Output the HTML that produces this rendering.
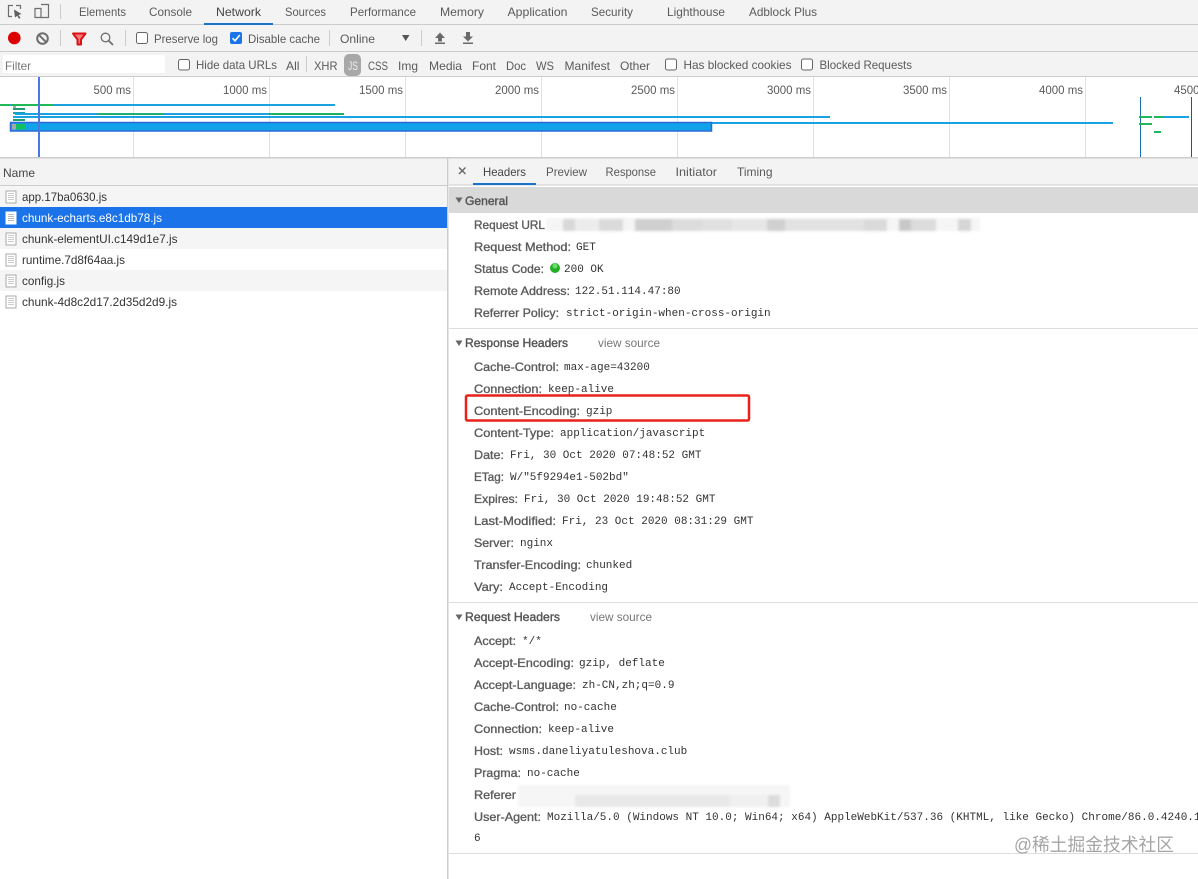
<!DOCTYPE html>
<html lang="en">
<head>
<meta charset="utf-8">
<title>DevTools Network</title>
<style>
html,body{margin:0;padding:0;background:#fff;width:1198px;height:879px;overflow:hidden}
svg{display:block}
text{font-family:"Liberation Sans",sans-serif;font-size:12px;fill:#555}
.t{fill:#5a5a5a}
.a{fill:#444}
.n{font-size:12px;fill:#5c5c5c;stroke:#5c5c5c;stroke-width:.35px}
.m{font-family:"Liberation Mono",monospace;font-size:11px;fill:#333;transform:translateY(-1px)}
.h{fill:#555;stroke:#555;stroke-width:.4px}
.f{fill:#333}
</style>
</head>
<body>
<svg xmlns="http://www.w3.org/2000/svg" width="1198" height="879" viewBox="0 0 1198 879">
<defs>
<filter id="b" x="-5%" y="-30%" width="110%" height="160%"><feGaussianBlur stdDeviation="1.2"/></filter>
<g id="doc"><path d="M.5.5h10v12H.5z" fill="#fff" stroke="#aaa"/><path d="M2.500 3h6M2.500 5h6M2.500 7h6M2.500 9h6" stroke="#ccc" stroke-width="1"/></g>
</defs>
<rect width="1198" height="879" fill="#fff"/>

<!-- top bars -->
<rect width="1198" height="77" fill="#f3f3f3"/>
<rect y="24" width="1198" height="1" fill="#ccc"/>
<rect y="51" width="1198" height="1" fill="#ccc"/>
<rect y="76" width="1198" height="1" fill="#ccc"/>

<!-- inspect icon -->
<path d="M13 5.500H8.500V16.500H12" fill="none" stroke="#6e6e6e" stroke-width="1.200"/>
<path d="M16 5.500H20.500V9" fill="none" stroke="#6e6e6e" stroke-width="1.200"/>
<path d="M14 9.500L21.500 14L18.500 15L20.500 18L19 18.800L17.200 15.800L15 17.500Z" fill="#5f5f5f"/>
<!-- device icon -->
<path d="M35 8.500H41V17.500H35ZM41 4.500H48.500V17.500H41" fill="none" stroke="#6e6e6e" stroke-width="1.200"/>
<rect x="60" y="4" width="1" height="15" fill="#ccc"/>

<!-- tabs -->
<g>
<text class="t" x="79" y="16" textLength="47" lengthAdjust="spacingAndGlyphs">Elements</text>
<text class="t" x="149" y="16" textLength="43" lengthAdjust="spacingAndGlyphs">Console</text>
<text class="a" x="216" y="16" textLength="45" lengthAdjust="spacingAndGlyphs">Network</text>
<text class="t" x="285" y="16" textLength="41" lengthAdjust="spacingAndGlyphs">Sources</text>
<text class="t" x="350" y="16" textLength="66" lengthAdjust="spacingAndGlyphs">Performance</text>
<text class="t" x="440" y="16" textLength="44" lengthAdjust="spacingAndGlyphs">Memory</text>
<text class="t" x="507.500" y="16" textLength="60" lengthAdjust="spacingAndGlyphs">Application</text>
<text class="t" x="591" y="16" textLength="42" lengthAdjust="spacingAndGlyphs">Security</text>
<text class="t" x="667" y="16" textLength="58" lengthAdjust="spacingAndGlyphs">Lighthouse</text>
<text class="t" x="749" y="16" textLength="68" lengthAdjust="spacingAndGlyphs">Adblock Plus</text>
</g>
<rect x="204" y="23" width="69" height="2" fill="#1a73c8"/>

<!-- toolbar -->
<circle cx="14.300" cy="38" r="6.300" fill="#dd0000"/>
<circle cx="42.500" cy="38.500" r="5.300" fill="none" stroke="#6e6e6e" stroke-width="2"/>
<path d="M38.800 34.800L46.200 42.200" stroke="#6e6e6e" stroke-width="2"/>
<rect x="60" y="30" width="1" height="16" fill="#ccc"/>
<path d="M73 33.500H85.500L81 39.500V44.500H77.500V39.500Z" fill="#f47c7c" stroke="#dd1111" stroke-width="2" stroke-linejoin="round"/>
<circle cx="105.500" cy="37.500" r="4.300" fill="none" stroke="#6e6e6e" stroke-width="1.300"/>
<path d="M108.500 40.500L113 45" stroke="#6e6e6e" stroke-width="1.800"/>
<rect x="125" y="30" width="1" height="16" fill="#ccc"/>
<rect x="136.500" y="32.500" width="11" height="11" rx="2" fill="#fff" stroke="#666"/>
<text class="t" x="154" y="43" textLength="64" lengthAdjust="spacingAndGlyphs">Preserve log</text>
<rect x="230" y="32" width="12" height="12" rx="2" fill="#1a73e8"/>
<path d="M232.500 38.200L235 40.800L239.800 35" fill="none" stroke="#fff" stroke-width="1.600"/>
<text class="t" x="248" y="43" textLength="72" lengthAdjust="spacingAndGlyphs">Disable cache</text>
<rect x="329" y="30" width="1" height="16" fill="#ccc"/>
<text class="t" x="340" y="43" textLength="35" lengthAdjust="spacingAndGlyphs">Online</text>
<path d="M402 35H409.500L405.700 41Z" fill="#555"/>
<rect x="421" y="30" width="1" height="16" fill="#ccc"/>
<path d="M440 32.500L445 38H442V41.500H438V38H435Z" fill="#6a6a6a"/>
<rect x="435" y="42.500" width="10" height="1.500" fill="#6a6a6a"/>
<path d="M468 41.500L473 36.500H470V32H466V36.500H463Z" fill="#6a6a6a"/>
<rect x="463" y="42.500" width="10" height="1.500" fill="#6a6a6a"/>

<!-- filter row -->
<rect x="3" y="55" width="162" height="18" fill="#fff"/>
<text x="5" y="70" style="fill:#777" textLength="26" lengthAdjust="spacingAndGlyphs">Filter</text>
<rect x="178.500" y="59.500" width="11" height="10.500" rx="2" fill="#fff" stroke="#666"/>
<text class="t" x="196" y="69" textLength="81" lengthAdjust="spacingAndGlyphs">Hide data URLs</text>
<text class="t" x="286" y="70" textLength="13.500" lengthAdjust="spacingAndGlyphs">All</text>
<rect x="306" y="56" width="1" height="16" fill="#ccc"/>
<text class="t" x="314" y="70" textLength="23.500" lengthAdjust="spacingAndGlyphs">XHR</text>
<rect x="344" y="54" width="17" height="22" rx="5" fill="#a8a8a8"/>
<text x="348" y="70" style="fill:#eee" textLength="10" lengthAdjust="spacingAndGlyphs">JS</text>
<text class="t" x="368" y="70" textLength="20" lengthAdjust="spacingAndGlyphs">CSS</text>
<text class="t" x="398" y="70" textLength="20" lengthAdjust="spacingAndGlyphs">Img</text>
<text class="t" x="429" y="70" textLength="33" lengthAdjust="spacingAndGlyphs">Media</text>
<text class="t" x="472" y="70" textLength="24" lengthAdjust="spacingAndGlyphs">Font</text>
<text class="t" x="506" y="70" textLength="20" lengthAdjust="spacingAndGlyphs">Doc</text>
<text class="t" x="536" y="70" textLength="18" lengthAdjust="spacingAndGlyphs">WS</text>
<text class="t" x="564.500" y="70" textLength="45.500" lengthAdjust="spacingAndGlyphs">Manifest</text>
<text class="t" x="620" y="70" textLength="30" lengthAdjust="spacingAndGlyphs">Other</text>
<rect x="665.500" y="59" width="11" height="11" rx="2" fill="#fff" stroke="#666"/>
<text class="t" x="683.500" y="69" textLength="108" lengthAdjust="spacingAndGlyphs">Has blocked cookies</text>
<rect x="801.500" y="59" width="11" height="11" rx="2" fill="#fff" stroke="#666"/>
<text class="t" x="819.500" y="69" textLength="92.500" lengthAdjust="spacingAndGlyphs">Blocked Requests</text>

<!-- overview grid -->
<g fill="#e2e2e2">
<rect x="133" y="77" width="1" height="80"/><rect x="269" y="77" width="1" height="80"/>
<rect x="405" y="77" width="1" height="80"/><rect x="541" y="77" width="1" height="80"/>
<rect x="677" y="77" width="1" height="80"/><rect x="813" y="77" width="1" height="80"/>
<rect x="949" y="77" width="1" height="80"/><rect x="1085" y="77" width="1" height="80"/>
</g>
<rect y="157" width="1198" height="1.500" fill="#ccc"/>
<g>
<text class="t" x="93.500" y="94" textLength="37.500" lengthAdjust="spacingAndGlyphs">500 ms</text>
<text class="t" x="223" y="94" textLength="44" lengthAdjust="spacingAndGlyphs">1000 ms</text>
<text class="t" x="359" y="94" textLength="44" lengthAdjust="spacingAndGlyphs">1500 ms</text>
<text class="t" x="495" y="94" textLength="44" lengthAdjust="spacingAndGlyphs">2000 ms</text>
<text class="t" x="631" y="94" textLength="44" lengthAdjust="spacingAndGlyphs">2500 ms</text>
<text class="t" x="767" y="94" textLength="44" lengthAdjust="spacingAndGlyphs">3000 ms</text>
<text class="t" x="903" y="94" textLength="44" lengthAdjust="spacingAndGlyphs">3500 ms</text>
<text class="t" x="1039" y="94" textLength="44" lengthAdjust="spacingAndGlyphs">4000 ms</text>
<text class="t" x="1174" y="94" textLength="44" lengthAdjust="spacingAndGlyphs">4500 ms</text>
</g>

<!-- waterfall -->
<g>
<rect x="0" y="104" width="335" height="2" fill="#1aa3e0"/>
<rect x="0" y="104" width="10" height="2" fill="#1fba55"/>
<rect x="12" y="104" width="41" height="2" fill="#1fba55"/>
<rect x="13" y="106" width="3" height="2" fill="#aaa"/>
<rect x="13" y="108" width="12" height="2" fill="#1f9f70"/>
<rect x="13" y="112" width="12" height="2" fill="#1a9fb0"/>
<rect x="15" y="113" width="329" height="2" fill="#1aa3e0"/>
<rect x="97" y="113" width="66" height="2" fill="#1fb070"/>
<rect x="269" y="113" width="75" height="2" fill="#1fb060"/>
<rect x="13" y="116" width="817" height="2" fill="#1aa3e0"/>
<rect x="13" y="119" width="12" height="2" fill="#1f9f70"/>
<rect x="13" y="122" width="1100" height="2" fill="#1aa3e0"/>
<rect x="10.500" y="122.500" width="701" height="8.500" fill="#11a3ea" stroke="#2f68d8" stroke-width="1.500"/>
<rect x="12" y="124" width="4" height="5.500" fill="#a8a8a8"/>
<rect x="16" y="124" width="10" height="5.500" fill="#12c060"/>
</g>
<rect x="38" y="77" width="2" height="80" fill="#4a78e0"/>
<rect x="1140" y="97" width="1" height="60" fill="#1a6fb5"/>
<rect x="1191" y="97" width="1" height="60" fill="#a02828"/>
<rect x="1139" y="116" width="13" height="2" fill="#1fb860"/>
<rect x="1154" y="116" width="10" height="2" fill="#1fb860"/>
<rect x="1164" y="116" width="25" height="2" fill="#1aa3e0"/>
<rect x="1139" y="123" width="13" height="2" fill="#1fb860"/>
<rect x="1154" y="131" width="7" height="2" fill="#1fb860"/>

<!-- left panel -->
<rect y="158.500" width="447" height="27" fill="#f3f3f3"/>
<rect y="185" width="447" height="1" fill="#ccc"/>
<text class="a" x="3" y="177" textLength="32" lengthAdjust="spacingAndGlyphs">Name</text>
<rect y="186" width="447" height="21" fill="#f5f5f5"/>
<rect y="207" width="447" height="21" fill="#1a73e8"/>
<rect y="228" width="447" height="21" fill="#f5f5f5"/>
<rect y="270" width="447" height="21" fill="#f5f5f5"/>
<use href="#doc" x="5.500" y="190.500"/>
<g transform="translate(5.500 211.500)"><path d="M.5.5h10v12H.5z" fill="#fff" stroke="#fff"/><path d="M2.500 3h6M2.500 5h6M2.500 7h6M2.500 9h6" stroke="#bbb"/></g>
<use href="#doc" x="5.500" y="232.500"/>
<use href="#doc" x="5.500" y="253.500"/>
<use href="#doc" x="5.500" y="274.500"/>
<use href="#doc" x="5.500" y="295.500"/>
<text class="f" x="22" y="201" textLength="85" lengthAdjust="spacingAndGlyphs">app.17ba0630.js</text>
<text x="22" y="222" style="fill:#fff" textLength="140" lengthAdjust="spacingAndGlyphs">chunk-echarts.e8c1db78.js</text>
<text class="f" x="22" y="243" textLength="155.500" lengthAdjust="spacingAndGlyphs">chunk-elementUI.c149d1e7.js</text>
<text class="f" x="22" y="264" textLength="103" lengthAdjust="spacingAndGlyphs">runtime.7d8f64aa.js</text>
<text class="f" x="22" y="285" textLength="43" lengthAdjust="spacingAndGlyphs">config.js</text>
<text class="f" x="22" y="306" textLength="155" lengthAdjust="spacingAndGlyphs">chunk-4d8c2d17.2d35d2d9.js</text>
<rect x="447" y="158" width="1.500" height="721" fill="#ccc"/>

<!-- right panel tabs -->
<rect x="449" y="158.500" width="749" height="26.500" fill="#f3f3f3"/>
<rect x="449" y="184.500" width="749" height="1" fill="#ccc"/>
<path d="M459 167.500L465.500 174M465.500 167.500L459 174" stroke="#666" stroke-width="1.400"/>
<text class="a" x="483" y="176" textLength="43" lengthAdjust="spacingAndGlyphs">Headers</text>
<text class="t" x="546" y="176" textLength="41" lengthAdjust="spacingAndGlyphs">Preview</text>
<text class="t" x="605.500" y="176" textLength="50.500" lengthAdjust="spacingAndGlyphs">Response</text>
<text class="t" x="675.500" y="176" textLength="41.500" lengthAdjust="spacingAndGlyphs">Initiator</text>
<text class="t" x="737" y="176" textLength="35.500" lengthAdjust="spacingAndGlyphs">Timing</text>
<rect x="473" y="183" width="63" height="2" fill="#1a73c8"/>

<!-- General -->
<rect x="449" y="187" width="749" height="26" fill="#d9d9d9"/>
<path d="M455.500 197.500H462.500L459 203Z" fill="#666"/>
<text class="h" x="465" y="205" textLength="43" lengthAdjust="spacingAndGlyphs">General</text>
<text class="n" x="474" y="229" textLength="71" lengthAdjust="spacingAndGlyphs">Request URL</text>
<g filter="url(#b)">
<rect x="546" y="218" width="434" height="13" fill="#f5f5f5"/>
<rect x="563" y="219" width="12" height="12" fill="#d8d8d8"/>
<rect x="575" y="219" width="24" height="12" fill="#ececec"/>
<rect x="599" y="219" width="24" height="12" fill="#dadada"/>
<rect x="635" y="219" width="37" height="12" fill="#cfcfcf"/>
<rect x="672" y="219" width="30" height="12" fill="#dcdcdc"/>
<rect x="702" y="219" width="30" height="12" fill="#e0e0e0"/>
<rect x="732" y="219" width="35" height="12" fill="#e6e6e6"/>
<rect x="767" y="219" width="18" height="12" fill="#d0d0d0"/>
<rect x="785" y="219" width="79" height="12" fill="#e2e2e2"/>
<rect x="864" y="219" width="23" height="12" fill="#dadada"/>
<rect x="899" y="219" width="12" height="12" fill="#c8c8c8"/>
<rect x="911" y="219" width="25" height="12" fill="#dcdcdc"/>
<rect x="958" y="219" width="13" height="12" fill="#d6d6d6"/>
</g>
<text class="n" x="474" y="251" textLength="97" lengthAdjust="spacingAndGlyphs">Request Method:</text>
<text class="m" x="576" y="251">GET</text>
<text class="n" x="474" y="273" textLength="70" lengthAdjust="spacingAndGlyphs">Status Code:</text>
<circle cx="555" cy="268" r="5" fill="#22b022"/>
<circle cx="555" cy="266" r="2.500" fill="#6fdc6f"/>
<text class="m" x="564" y="273">200 OK</text>
<text class="n" x="474" y="295" textLength="96" lengthAdjust="spacingAndGlyphs">Remote Address:</text>
<text class="m" x="575" y="295">122.51.114.47:80</text>
<text class="n" x="474" y="317" textLength="85" lengthAdjust="spacingAndGlyphs">Referrer Policy:</text>
<text class="m" x="566" y="317">strict-origin-when-cross-origin</text>
<rect x="449" y="328" width="749" height="1" fill="#ddd"/>

<!-- Response Headers -->
<path d="M455.500 340.500H462.500L459 346Z" fill="#666"/>
<text class="h" x="465" y="347" textLength="103" lengthAdjust="spacingAndGlyphs">Response Headers</text>
<text x="598" y="347" style="fill:#777" textLength="62" lengthAdjust="spacingAndGlyphs">view source</text>
<text class="n" x="474" y="371" textLength="85" lengthAdjust="spacingAndGlyphs">Cache-Control:</text>
<text class="m" x="564" y="371">max-age=43200</text>
<text class="n" x="474" y="393" textLength="68" lengthAdjust="spacingAndGlyphs">Connection:</text>
<text class="m" x="548" y="393">keep-alive</text>
<text class="n" x="474" y="415" textLength="106" lengthAdjust="spacingAndGlyphs">Content-Encoding:</text>
<text class="m" x="586" y="415">gzip</text>
<text class="n" x="474" y="437" textLength="80" lengthAdjust="spacingAndGlyphs">Content-Type:</text>
<text class="m" x="560" y="437">application/javascript</text>
<text class="n" x="474" y="459" textLength="30" lengthAdjust="spacingAndGlyphs">Date:</text>
<text class="m" x="510" y="459">Fri, 30 Oct 2020 07:48:52 GMT</text>
<text class="n" x="474" y="481" textLength="30" lengthAdjust="spacingAndGlyphs">ETag:</text>
<text class="m" x="510" y="481">W/"5f9294e1-502bd"</text>
<text class="n" x="474" y="503" textLength="44" lengthAdjust="spacingAndGlyphs">Expires:</text>
<text class="m" x="524" y="503">Fri, 30 Oct 2020 19:48:52 GMT</text>
<text class="n" x="474" y="525" textLength="82" lengthAdjust="spacingAndGlyphs">Last-Modified:</text>
<text class="m" x="562" y="525">Fri, 23 Oct 2020 08:31:29 GMT</text>
<text class="n" x="474" y="547" textLength="40" lengthAdjust="spacingAndGlyphs">Server:</text>
<text class="m" x="520" y="547">nginx</text>
<text class="n" x="474" y="569" textLength="107" lengthAdjust="spacingAndGlyphs">Transfer-Encoding:</text>
<text class="m" x="586" y="569">chunked</text>
<text class="n" x="474" y="591" textLength="29" lengthAdjust="spacingAndGlyphs">Vary:</text>
<text class="m" x="509" y="591">Accept-Encoding</text>
<rect x="449" y="602" width="749" height="1" fill="#ddd"/>

<!-- Request Headers -->
<path d="M455.500 614.500H462.500L459 620Z" fill="#666"/>
<text class="h" x="465" y="621" textLength="95" lengthAdjust="spacingAndGlyphs">Request Headers</text>
<text x="590" y="621" style="fill:#777" textLength="62" lengthAdjust="spacingAndGlyphs">view source</text>
<text class="n" x="474" y="645" textLength="42" lengthAdjust="spacingAndGlyphs">Accept:</text>
<text class="m" x="522" y="645">*/*</text>
<text class="n" x="474" y="667" textLength="100" lengthAdjust="spacingAndGlyphs">Accept-Encoding:</text>
<text class="m" x="579" y="667">gzip, deflate</text>
<text class="n" x="474" y="689" textLength="102" lengthAdjust="spacingAndGlyphs">Accept-Language:</text>
<text class="m" x="582" y="689">zh-CN,zh;q=0.9</text>
<text class="n" x="474" y="711" textLength="85" lengthAdjust="spacingAndGlyphs">Cache-Control:</text>
<text class="m" x="564" y="711">no-cache</text>
<text class="n" x="474" y="733" textLength="68" lengthAdjust="spacingAndGlyphs">Connection:</text>
<text class="m" x="548" y="733">keep-alive</text>
<text class="n" x="474" y="755" textLength="29" lengthAdjust="spacingAndGlyphs">Host:</text>
<text class="m" x="509" y="755">wsms.daneliyatuleshova.club</text>
<text class="n" x="474" y="777" textLength="47" lengthAdjust="spacingAndGlyphs">Pragma:</text>
<text class="m" x="527" y="777">no-cache</text>
<text class="n" x="474" y="799" textLength="42" lengthAdjust="spacingAndGlyphs">Referer</text>
<g filter="url(#b)">
<rect x="518" y="785" width="272" height="22" fill="#f6f6f6"/>
<rect x="575" y="795" width="155" height="12" fill="#e8e8e8"/>
<rect x="730" y="795" width="38" height="12" fill="#f0f0f0"/>
<rect x="768" y="795" width="12" height="12" fill="#dcdcdc"/>
</g>
<text class="n" x="474" y="821" textLength="67" lengthAdjust="spacingAndGlyphs">User-Agent:</text>
<text class="m" x="547" y="821">Mozilla/5.0 (Windows NT 10.0; Win64; x64) AppleWebKit/537.36 (KHTML, like Gecko) Chrome/86.0.4240.1</text>
<text class="m" x="474" y="842">6</text>
<rect x="449" y="853" width="749" height="1" fill="#ddd"/>

<!-- annotation -->
<rect x="466" y="395.500" width="283" height="25" rx="1.500" fill="none" stroke="#e8211a" stroke-width="2.500"/>

<!-- watermark -->
<text x="1014" y="851" style="font-family:'Liberation Sans','Noto Sans CJK SC',sans-serif;font-size:18px;fill:#a5a5a5" textLength="160" lengthAdjust="spacingAndGlyphs">@稀土掘金技术社区</text>
</svg>
</body>
</html>
